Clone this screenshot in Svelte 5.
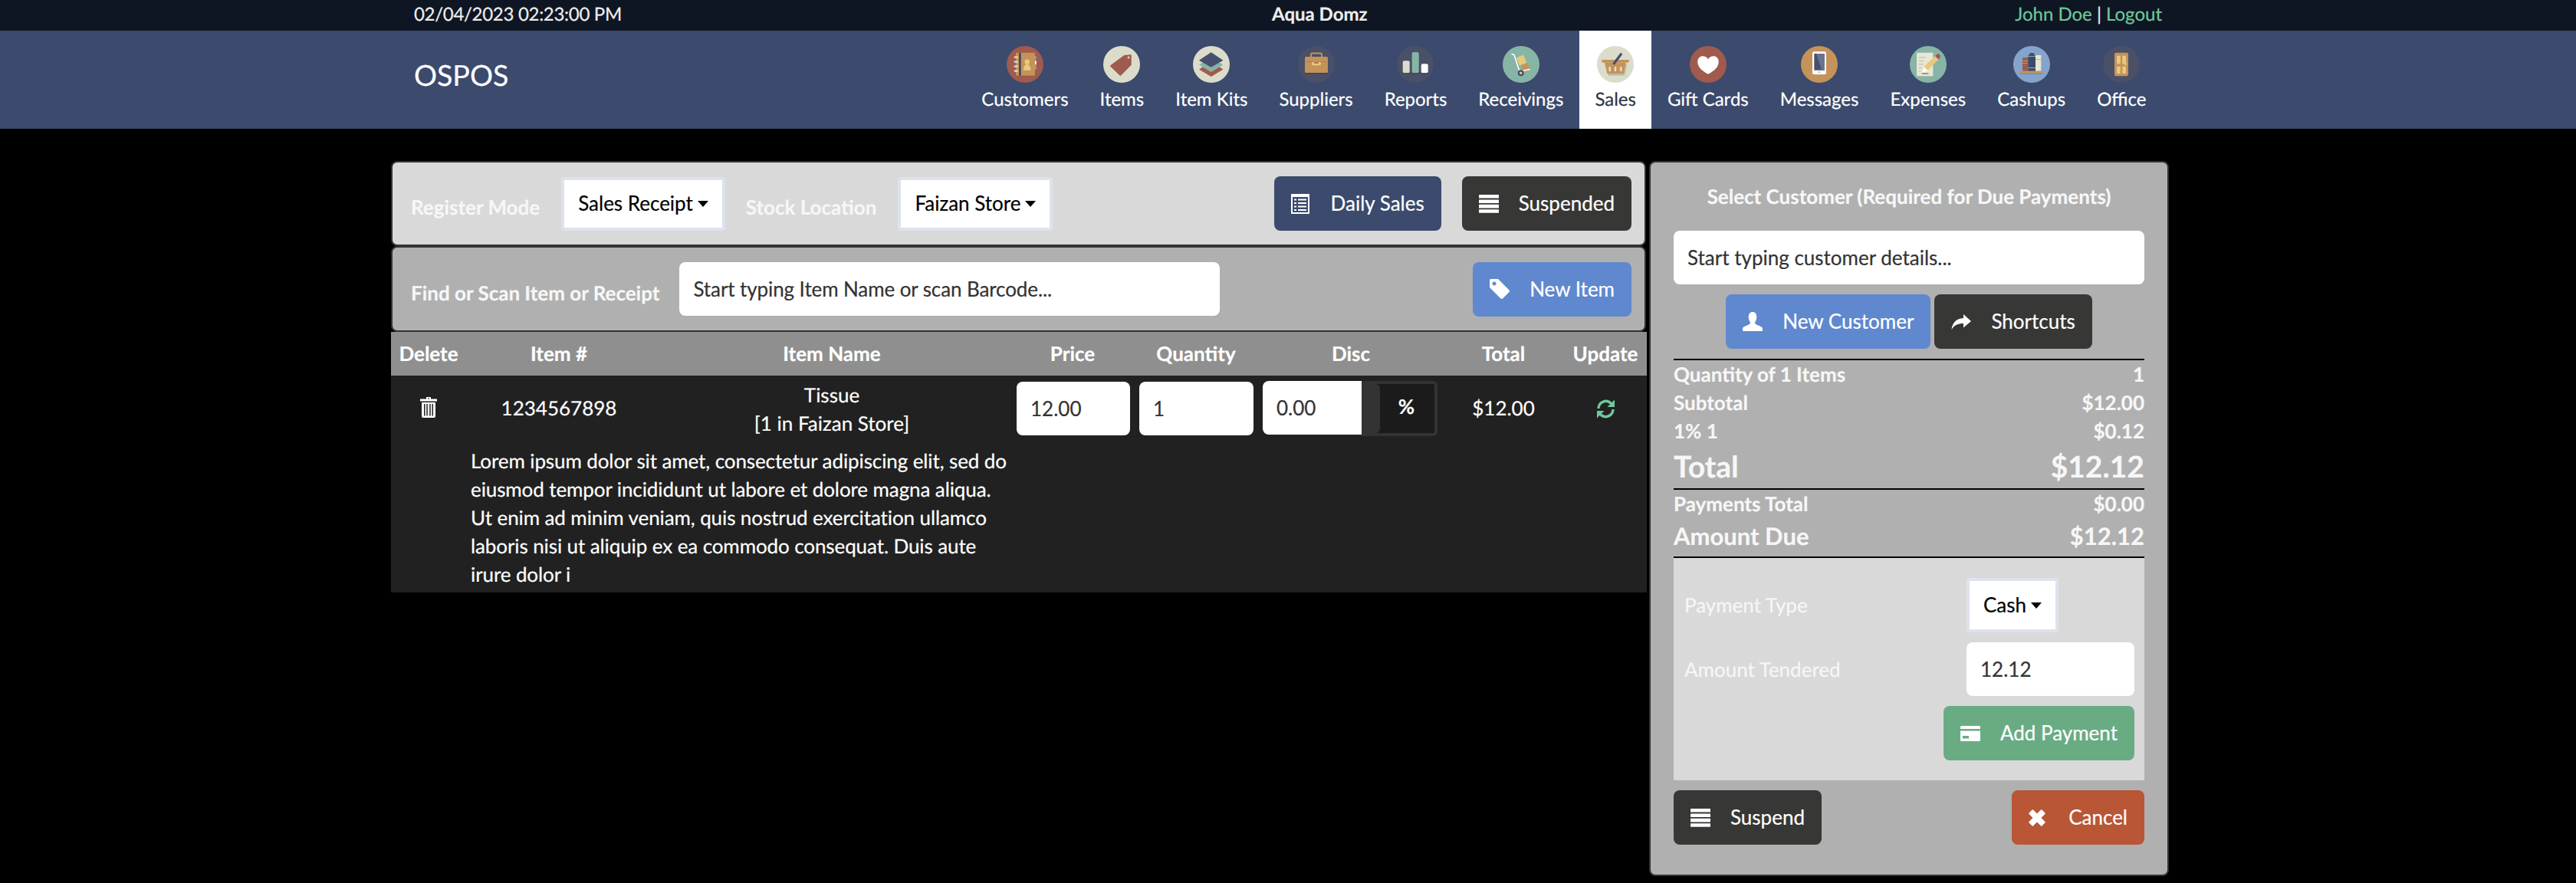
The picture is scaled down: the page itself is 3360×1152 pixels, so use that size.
<script>
    const columns = ['Delete', 'Item #', 'Item Name', 'Price', 'Quantity', 'Disc', 'Total', 'Update']
    const description = 'Lorem ipsum dolor sit amet, consectetur adipiscing elit, sed do eiusmod tempor incididunt ut labore et dolore magna aliqua. Ut enim ad minim veniam, quis nostrud exercitation ullamco laboris nisi ut aliquip ex ea commodo consequat. Duis aute irure dolor i'

    const brown = '#c4935a', red = '#a05a4e', teal = '#87b5a5', cream = '#dcdccb', slate = '#4a5068', blue = '#85a4cb'
    const modules = [
        { label: 'Customers', bg: red, art: customers },
        { label: 'Items', bg: cream, art: items },
        { label: 'Item Kits', bg: cream, art: kits },
        { label: 'Suppliers', bg: slate, art: suppliers },
        { label: 'Reports', bg: slate, art: reports },
        { label: 'Receivings', bg: teal, art: receivings },
        { label: 'Sales', bg: cream, art: sales, active: true },
        { label: 'Gift Cards', bg: red, art: giftcards },
        { label: 'Messages', bg: brown, art: messages },
        { label: 'Expenses', bg: teal, art: expenses },
        { label: 'Cashups', bg: blue, art: cashups },
        { label: 'Office', bg: slate, art: office },
    ]
</script>

{#snippet customers()}
    <rect x="12.5" y="9.5" width="25" height="30" rx="1" fill="#8a5f45"/>
    <rect x="12" y="8.7" width="25" height="30" rx="1" fill="#c4935a"/>
    <rect x="16" y="8.7" width="2.7" height="30" fill="#3d4a66"/>
    <g fill="#dcdccb">
        <rect x="9.5" y="13.6" width="5.5" height="2.2" rx="1"/>
        <rect x="9.5" y="19.6" width="5.5" height="2.2" rx="1"/>
        <rect x="9.5" y="25.6" width="5.5" height="2.2" rx="1"/>
        <rect x="9.5" y="31.6" width="5.5" height="2.2" rx="1"/>
    </g>
    <rect x="37" y="13" width="1.6" height="5" fill="#85a4cb"/>
    <rect x="37" y="19.3" width="1.8" height="5" fill="#fff"/>
    <rect x="37" y="25.6" width="1.6" height="5" fill="#87b5a5"/>
    <circle cx="26.7" cy="20.7" r="3.2" fill="#e8c97d"/>
    <path d="M22 31.7c0-5 2-8 4.7-8s4.7 3 4.7 8z" fill="#e8c97d"/>
{/snippet}

{#snippet items()}
    <path d="M27.3 12 35.7 11.3a1 1 0 0 1 1 1V24.7L23 38.6a1 1 0 0 1-1.4 0L9.4 26.7a1 1 0 0 1 0-1.4z" fill="#a05a4e"/>
    <circle cx="33" cy="15" r="1.4" fill="#dcdccb"/>
{/snippet}

{#snippet kits()}
    <path d="M23.7 21 38.7 30.5 23.7 39.5 8.7 30.5z" fill="#a05a4e" stroke="#a05a4e" stroke-linejoin="round"/>
    <path d="M23.7 15 38.7 24.5 23.7 33.5 8.7 24.5z" fill="#87b5a5" stroke="#87b5a5" stroke-linejoin="round"/>
    <path d="M23.7 8.7 38.7 18.7 23.7 27.3 8.7 18.7z" fill="#46506e" stroke="#46506e" stroke-linejoin="round"/>
{/snippet}

{#snippet suppliers()}
    <rect x="17" y="9.5" width="14" height="7" rx="2" fill="none" stroke="#c4935a" stroke-width="2"/>
    <rect x="9" y="15" width="30" height="21.5" rx="1.5" fill="#3d4358"/>
    <rect x="9" y="14" width="30" height="21" rx="1.5" fill="#c4935a"/>
    <rect x="9" y="20.3" width="30" height="0.8" fill="#a87d49"/>
    <rect x="18" y="20.7" width="12" height="4.6" rx="2" fill="#e8c97d"/>
    <rect x="21" y="20.7" width="6" height="2.2" fill="#a87d49"/>
{/snippet}

{#snippet reports()}
    <rect x="7.7" y="19.3" width="9" height="16" rx="2" fill="#dcdccb"/>
    <rect x="19.7" y="8" width="9" height="27.3" rx="2" fill="#87b5a5"/>
    <rect x="31.7" y="23.3" width="9" height="12" rx="2" fill="#fff"/>
    <rect x="7.7" y="35.3" width="33" height="1" fill="#3d4358"/>
{/snippet}

{#snippet receivings()}
    <rect x="19.5" y="13" width="10" height="11" transform="rotate(-22 24.5 18.5)" fill="#e8c97d"/>
    <rect x="25" y="23.5" width="9.5" height="9.5" transform="rotate(-18 30 28)" fill="#c4935a"/>
    <path d="M12 10.500 15 11.500 22 33.300 35 30.500" fill="none" stroke="#fff" stroke-width="1.600" stroke-linecap="round" stroke-linejoin="round"/>
    <circle cx="23.700" cy="35.300" r="4" fill="#46506e"/>
    <circle cx="23.700" cy="35.300" r="1.700" fill="#e8c97d"/>
{/snippet}

{#snippet sales()}
    <path d="M11 24h28l-3 14.500H15z" fill="#b9b9a8"/>
    <path d="M6 18h36l-1 3.700H7z" fill="#c4935a"/>
    <path d="M10 21.700h28L34.700 36H13.300z" fill="#c4935a"/>
    <g fill="#e8e0c9">
        <rect x="15.500" y="26.700" width="2.400" height="6.600" rx="1.200"/>
        <rect x="22.800" y="26.700" width="2.400" height="6.600" rx="1.200"/>
        <rect x="30.100" y="26.700" width="2.400" height="6.600" rx="1.200"/>
    </g>
    <path d="M22.300 22.700 31.300 10.700" stroke="#46506e" stroke-width="3.200" stroke-linecap="round"/>
{/snippet}

{#snippet giftcards()}
    <path d="M24 36.700C15 32 10.300 27 10.300 20.500 10.300 16 13.500 13.300 17 13.300 20 13.300 22.500 14.800 24 17.300 25.500 14.800 28 13.300 31 13.300 34.500 13.300 37.700 16 37.700 20.500 37.700 27 33 32 24 36.700z" fill="#fff"/>
{/snippet}

{#snippet messages()}
    <rect x="15" y="8" width="18" height="30" rx="2" fill="#a87d49"/>
    <rect x="15" y="7.300" width="18" height="30" rx="2" fill="#fff"/>
    <rect x="17.300" y="10" width="13.400" height="21.700" fill="#46506e"/>
    <path d="M20 10h10.700v21.700h-3.500z" fill="#6b7290"/>
    <circle cx="24" cy="34.300" r="1.300" fill="#c9c4b0"/>
{/snippet}

{#snippet expenses()}
    <rect x="9" y="8.700" width="21.300" height="30.600" rx="1" fill="#e8e6d4"/>
    <g stroke="#b9b9a8" stroke-width="1">
        <path d="M12 15h8M12 19.500h6M12 24h6M12 28.500h4M12 33h2"/>
    </g>
    <path d="M17 33.300 18.500 27 33 13 37.500 17.500 23 32z" fill="#e8c97d"/>
    <path d="M33 13 35.500 10.700a2 2 0 0 1 2.700 0l1.300 1.300a2 2 0 0 1 0 2.700L37.500 17.500z" fill="#a05a4e"/>
    <path d="M16.500 34.500 18.500 27 23.500 32z" fill="#fff"/>
    <path d="M15.500 36h9" stroke="#46506e" stroke-width="1"/>
{/snippet}

{#snippet cashups()}
    <rect x="12" y="15" width="7.300" height="17.700" rx="1" fill="#a05a4e"/>
    <rect x="12" y="19" width="7.300" height="1" fill="#c4935a"/>
    <rect x="12" y="22" width="7.300" height="1" fill="#c4935a"/>
    <rect x="19.300" y="12" width="9.700" height="20.700" fill="#3d4a66"/>
    <rect x="21" y="9.300" width="6.300" height="3" rx="1" fill="#3d4a66"/>
    <rect x="19.300" y="13" width="9.700" height="1" fill="#87b5a5"/>
    <rect x="19.300" y="28" width="9.700" height="1" fill="#87b5a5"/>
    <rect x="29" y="12" width="7.300" height="20.700" fill="#e8e6d4"/>
    <rect x="29" y="17" width="7.300" height="1" fill="#b9b9a8"/>
    <rect x="9" y="32.700" width="29.700" height="3" fill="#c4935a"/>
    <rect x="9" y="35.700" width="29.700" height="1" fill="#6d87ab"/>
{/snippet}

{#snippet office()}
    <rect x="15" y="8.700" width="18" height="30.600" rx="2" fill="#c4935a"/>
    <g fill="#e8c97d">
        <rect x="18" y="12.700" width="4.700" height="10.600"/>
        <rect x="25.300" y="12.700" width="4.700" height="10.600"/>
        <rect x="18" y="26.700" width="4.700" height="9.300"/>
        <rect x="25.300" y="26.700" width="4.700" height="9.300"/>
    </g>
    <circle cx="29.300" cy="23.300" r="1.800" fill="#e8c97d"/>
{/snippet}

{#snippet listAlt()}
    <svg width="24" height="26" viewBox="0 0 24 26" fill="#fff">
        <path fill-rule="evenodd" d="M0 0h24v26H0zM2 4v20h20V4z"/>
        <path d="M4 6.500h3v2H4zM9 6.500h11v2H9zM4 11h3v2H4zM9 11h11v2H9zM4 15.500h3v2H4zM9 15.500h11v2H9zM4 20h3v2H4zM9 20h11v2H9z"/>
    </svg>
{/snippet}

{#snippet bars()}
    <svg width="26" height="24" viewBox="0 0 26 24" fill="#fff">
        <rect width="26" height="4.600" rx="0.500"/>
        <rect y="6.400" width="26" height="4.600" rx="0.500"/>
        <rect y="12.800" width="26" height="4.600" rx="0.500"/>
        <rect y="19.200" width="26" height="4.600" rx="0.500"/>
    </svg>
{/snippet}

{#snippet tag()}
    <svg width="26" height="26" viewBox="0 0 26 26" fill="#fff">
        <path fill-rule="evenodd" d="M1.500 0h9.500l14.500 14.500a2 2 0 0 1 0 2.500l-8.500 8.500a2 2 0 0 1-2.500 0L0 11V1.500A1.500 1.500 0 0 1 1.500 0zM6 3.500a2.500 2.500 0 1 0 .01 0z"/>
    </svg>
{/snippet}

{#snippet user()}
    <svg width="26" height="25" viewBox="0 0 26 25" fill="#fff">
        <path d="M13 0c3.300 0 5.300 2.700 5.300 6.500 0 3-1 5.500-2.300 7 0 1.500.6 2.300 2 3 3 1.200 6.500 2.500 8 4.500v4H0v-4c1.500-2 5-3.300 8-4.500 1.400-.7 2-1.500 2-3-1.300-1.500-2.300-4-2.300-7C7.700 2.700 9.700 0 13 0z"/>
    </svg>
{/snippet}

{#snippet share()}
    <svg width="26" height="20" viewBox="0 0 26 20" fill="#fff">
        <path d="M16 0 26 9 16 17.500V12C9 12 4 14 0.500 20 1.500 11 7 5.500 16 5z"/>
    </svg>
{/snippet}

{#snippet card()}
    <svg width="26" height="20" viewBox="0 0 26 20" fill="#fff">
        <path d="M1.500 0h23A1.500 1.500 0 0 1 26 1.500V4H0V1.500A1.500 1.500 0 0 1 1.500 0z"/>
        <path fill-rule="evenodd" d="M0 6.500h26v12a1.500 1.500 0 0 1-1.500 1.500h-23A1.500 1.500 0 0 1 0 18.500zM3 13v3.500h8V13z"/>
    </svg>
{/snippet}

{#snippet cross()}
    <svg width="22" height="22" viewBox="0 0 22 22" fill="#fff">
        <path d="M6 .5 11 5.500 16 .5a1 1 0 0 1 1.400 0l4 4a1 1 0 0 1 0 1.400L16.500 11l4.900 5a1 1 0 0 1 0 1.400l-4 4a1 1 0 0 1-1.400 0L11 16.500 6 21.500a1 1 0 0 1-1.400 0l-4-4a1 1 0 0 1 0-1.400L5.500 11 .6 6a1 1 0 0 1 0-1.400l4-4A1 1 0 0 1 6 .5z"/>
    </svg>
{/snippet}

<header class="topbar">
    <div class="wrap top-grid">
        <span class="clock">02/04/2023 02:23:00 PM</span>
        <strong>Aqua Domz</strong>
        <span class="account"><span class="green">John Doe</span> | <span class="green">Logout</span></span>
    </div>
</header>

<nav class="navbar">
    <div class="wrap nav-row">
        <div class="brand">OSPOS</div>
        <ul>
            {#each modules as mod}
                <li class:active={mod.active}>
                    <svg class="module-icon" width="48" height="48" viewBox="0 0 48 48">
                        <circle cx="24" cy="24" r="24" fill={mod.bg}/>
                        {@render mod.art()}
                    </svg>
                    <span>{mod.label}</span>
                </li>
            {/each}
        </ul>
    </div>
</nav>

<main class="wrap-main">
    <section class="register">
        <div class="panel light">
            <span class="lbl">Register Mode</span>
            <button class="select">Sales Receipt<i class="caret"></i></button>
            <span class="lbl">Stock Location</span>
            <button class="select">Faizan Store<i class="caret"></i></button>
            <div class="actions">
                <button class="btn navy"><span class="ico">{@render listAlt()}</span>Daily Sales</button>
                <button class="btn dark"><span class="ico">{@render bars()}</span>Suspended</button>
            </div>
        </div>
        <div class="panel mid">
            <span class="lbl">Find or Scan Item or Receipt</span>
            <input class="field item-search" placeholder="Start typing Item Name or scan Barcode..." />
            <div class="actions">
                <button class="btn blue"><span class="ico">{@render tag()}</span>New Item</button>
            </div>
        </div>

        <div class="table">
            <div class="row head">
                {#each columns as col}
                    <div>{col}</div>
                {/each}
            </div>
            <div class="row body">
                <div class="cell c-delete">
                    <svg width="22" height="27" viewBox="0 0 22 27" fill="#fff">
                        <path d="M8 0h6v2.500h8v3H0v-3h8zM10 1.500v1h2v-1z" fill-rule="evenodd"/>
                        <path fill-rule="evenodd" d="M2 7h18v18a2 2 0 0 1-2 2H4a2 2 0 0 1-2-2zM5 9v15.500h1.500V9zM8.300 9v15.500h1.500V9zM12.200 9v15.500h1.500V9zM15.500 9v15.500H17V9z"/>
                    </svg>
                </div>
                <div class="cell c-mid">1234567898</div>
                <div class="cell c-name">Tissue<br>[1 in Faizan Store]</div>
                <div class="cell c-price"><input class="field" value="12.00" /></div>
                <div class="cell c-qty"><input class="field" value="1" /></div>
                <div class="cell c-disc">
                    <input class="field" value="0.00" />
                    <div class="addon"><span>%</span></div>
                </div>
                <div class="cell c-mid">$12.00</div>
                <div class="cell c-update">
                    <svg width="25" height="25" viewBox="0 0 25 25">
                        <g fill="none" stroke="#6fc99b" stroke-width="3.400">
                            <path d="M3 12A9.500 9.500 0 0 1 19.500 5.500"/>
                            <path d="M22 13A9.500 9.500 0 0 1 5.500 19.500"/>
                        </g>
                        <path d="M24 .5V10H14.500z" fill="#6fc99b"/>
                        <path d="M1 24.500V15H10.500z" fill="#6fc99b"/>
                    </svg>
                </div>
                <div class="desc">{description}</div>
            </div>
        </div>
    </section>

    <aside class="summary">
        <div class="title">Select Customer (Required for Due Payments)</div>
        <input class="field" placeholder="Start typing customer details..." />
        <div class="cust-btns">
            <button class="btn blue"><span class="ico">{@render user()}</span>New Customer</button>
            <button class="btn dark"><span class="ico">{@render share()}</span>Shortcuts</button>
        </div>

        <div class="totals">
            <div class="line"><span>Quantity of 1 Items</span><span>1</span></div>
            <div class="line"><span>Subtotal</span><span>$12.00</span></div>
            <div class="line"><span>1% 1</span><span>$0.12</span></div>
            <div class="line big"><span>Total</span><span>$12.12</span></div>
        </div>
        <div class="totals second">
            <div class="line"><span>Payments Total</span><span>$0.00</span></div>
            <div class="line due"><span>Amount Due</span><span>$12.12</span></div>
        </div>

        <div class="payment">
            <span class="plbl">Payment Type</span>
            <button class="select pay-select">Cash<i class="caret"></i></button>
            <span class="plbl">Amount Tendered</span>
            <input class="field" value="12.12" />
            <button class="btn green-btn"><span class="ico">{@render card()}</span>Add Payment</button>
        </div>

        <div class="bottom-btns">
            <button class="btn dark"><span class="ico">{@render bars()}</span>Suspend</button>
            <button class="btn orange"><span class="ico">{@render cross()}</span>Cancel</button>
        </div>
    </aside>
</main>

<style>
    :global(body) {
        margin: 0;
        background: #000;
        font-family: Lato, "Noto Sans", sans-serif;
        font-size: 26px;
        line-height: 37px;
        color: #fff;
        text-rendering: geometricPrecision;
        -webkit-text-stroke: 0.2px;
    }
    .wrap {
        width: 2340px;
        margin: 0 auto;
        padding: 0 30px;
        box-sizing: border-box;
    }
    .topbar {
        height: 40px;
        background: #0f1623;
        color: #eee;
        font-size: 24px;
        line-height: 38px;
    }
    .top-grid {
        display: grid;
        grid-template-columns: 1119px auto 1fr;
    }
    .clock {
        letter-spacing: -0.3px;
    }
    .account {
        text-align: right;
    }
    .green {
        color: #6fc99b;
    }
    .navbar {
        height: 128px;
        background: #3b4a6d;
    }
    .nav-row {
        display: flex;
        justify-content: space-between;
        height: 128px;
    }
    .brand {
        font-size: 37.5px;
        line-height: 44px;
        padding-top: 36px;
    }
    ul {
        display: flex;
        margin: 0;
        padding: 0;
        list-style: none;
        font-size: 24px;
    }
    li {
        display: flex;
        flex-direction: column;
        align-items: center;
        padding: 20px 20.5px 0;
        color: #fff;
    }
    li.active {
        background: #fff;
        color: #2c3547;
    }
    .module-icon {
        display: block;
        margin-bottom: 3px;
    }
    .wrap-main {
        display: flex;
        width: 2340px;
        margin: 42px auto 0;
        gap: 3px;
    }
    .register {
        width: 1638px;
    }
    .panel {
        display: flex;
        align-items: center;
        box-sizing: border-box;
        border: 2px solid #333;
        border-radius: 8px;
        padding: 0 17px 0 24px;
        margin-right: 1px;
    }
    .light {
        height: 111px;
        background: #d9d9d9;
    }
    .mid {
        height: 112px;
        background: #b0b0b0;
    }
    .lbl {
        margin-top: 10px;
        font-weight: 700;
        color: #f7f7f7;
    }
    .select {
        display: inline-flex;
        align-items: center;
        box-sizing: border-box;
        height: 70px;
        margin: 0 27px 0 28px;
        padding: 0 18px;
        border: 4px solid #dde2ee;
        border-radius: 4px;
        background: #fff;
        color: #000;
        font: inherit;
    }
    .caret {
        margin-left: 6px;
        border-top: 8px solid #000;
        border-left: 7px solid transparent;
        border-right: 7px solid transparent;
    }
    .actions {
        display: flex;
        gap: 27px;
        margin-left: auto;
    }
    .btn {
        display: inline-flex;
        align-items: center;
        box-sizing: border-box;
        height: 71px;
        padding: 0 22px;
        border: 0;
        border-radius: 8px;
        color: #fff;
        font: inherit;
    }
    .ico {
        display: flex;
        width: 26px;
        margin-right: 26px;
    }
    .navy {
        background: #3b4a6d;
    }
    .dark {
        background: #373735;
    }
    .blue {
        background: #5f88cf;
    }
    .green-btn {
        background: #69ac84;
    }
    .orange {
        background: #b85636;
    }
    .field {
        display: block;
        box-sizing: border-box;
        width: 100%;
        height: 70px;
        padding: 0 18px;
        border: 0;
        border-radius: 8px;
        background: #fff;
        color: #333;
        font: inherit;
        outline: none;
    }
    .field::placeholder {
        color: #333;
        opacity: 1;
    }
    .item-search {
        width: 705px;
        margin-left: 26px;
        letter-spacing: -0.1px;
    }
    .row {
        display: grid;
        grid-template-columns: 98px 242px 470px 158px 164px 240px 158px 108px;
    }
    .head {
        height: 57px;
        align-items: center;
        background: #8f8f8f;
        font-weight: 700;
        text-align: center;
    }
    .body {
        height: 283px;
        grid-template-rows: 93px 1fr;
        background: #212121;
    }
    .cell {
        text-align: center;
    }
    .c-delete {
        padding-top: 27px;
    }
    .c-delete svg,
    .c-update svg {
        display: inline-block;
    }
    .c-mid {
        padding-top: 24px;
    }
    .c-name {
        padding-top: 7px;
    }
    .c-price {
        padding: 8px 4px 0 6px;
    }
    .c-qty {
        padding: 8px 7px 0 8px;
    }
    .c-disc {
        display: flex;
        padding: 7px 6px 0 5px;
    }
    .c-disc .field {
        width: 129px;
        border-radius: 8px 0 0 8px;
    }
    .addon {
        display: flex;
        box-sizing: border-box;
        width: 99px;
        height: 72px;
        border: 4px solid #333;
        border-left: 0;
        border-radius: 0 6px 6px 0;
        background: #1b1b1b;
        font-weight: 700;
    }
    .addon::before {
        content: '';
        width: 24px;
        background: #333;
        border-radius: 0 6px 6px 0;
    }
    .addon span {
        margin: 11px auto 0;
        padding-right: 2px;
    }
    .c-update {
        padding-top: 28px;
    }
    .desc {
        grid-column: 2 / span 2;
        padding-left: 6px;
        letter-spacing: -0.1px;
    }
    .summary {
        box-sizing: border-box;
        width: 678px;
        height: 933px;
        padding: 0 30px;
        border: 2px solid #333;
        border-radius: 8px;
        background: #b0b0b0;
    }
    .title {
        padding: 26px 0 26px;
        font-weight: 700;
        text-align: center;
        color: #f7f7f7;
    }
    .cust-btns {
        display: flex;
        justify-content: center;
        gap: 5px;
        margin: 13px 0;
    }
    .totals {
        border-top: 2px solid #000;
    }
    .line {
        display: flex;
        justify-content: space-between;
        font-weight: 700;
        color: #f7f7f7;
    }
    .big {
        height: 56px;
        align-items: center;
        font-size: 39px;
    }
    .due {
        height: 50px;
        padding-bottom: 4px;
        box-sizing: border-box;
        align-items: center;
        font-size: 31px;
    }
    .payment {
        display: grid;
        grid-template-columns: 1fr 219px;
        gap: 13px 0;
        align-items: center;
        align-content: start;
        box-sizing: border-box;
        height: 292px;
        padding: 26px 13px 0 14px;
        border-top: 2px solid #000;
        background: #d9d9d9;
    }
    .plbl {
        color: #f7f7f7;
    }
    .pay-select {
        justify-self: start;
        height: 71px;
        margin: 0;
    }
    .green-btn {
        grid-column: 1 / -1;
        justify-self: end;
    }
    .bottom-btns {
        display: flex;
        justify-content: space-between;
        margin-top: 13px;
    }
</style>
